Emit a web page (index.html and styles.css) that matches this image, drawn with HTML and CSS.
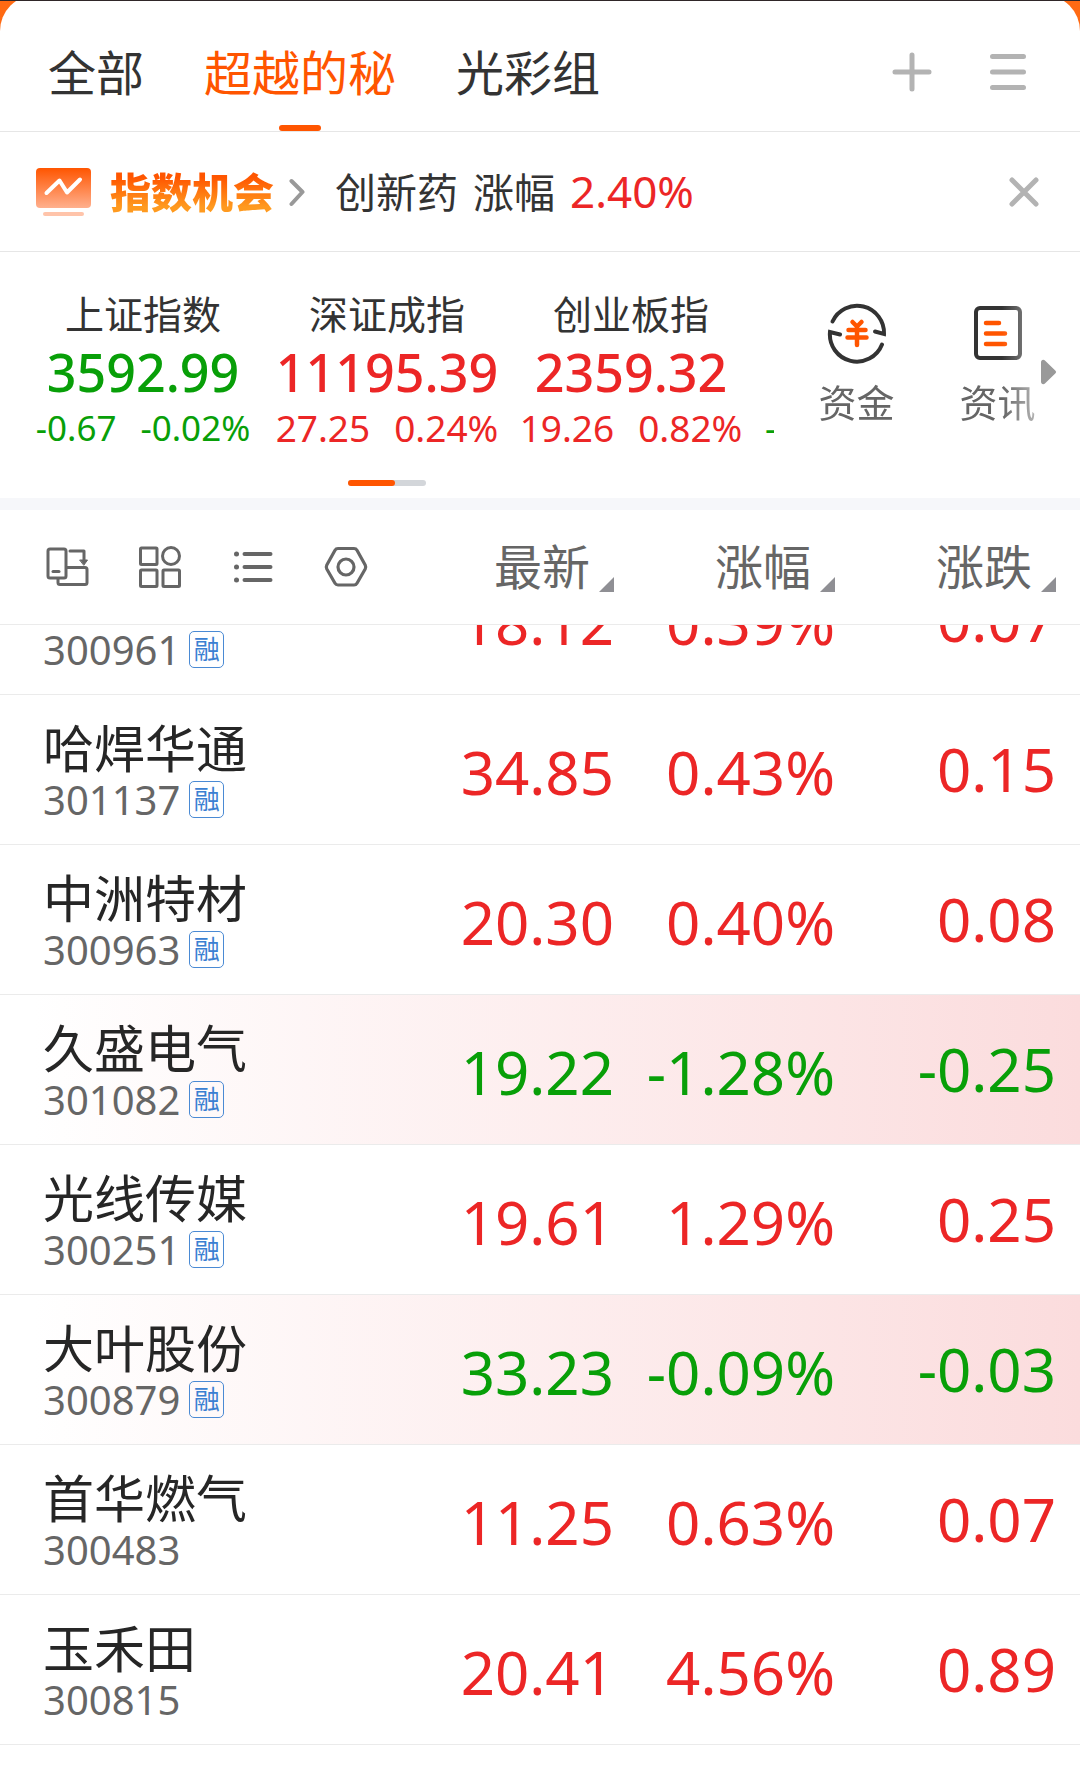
FILE: index.html
```html
<!DOCTYPE html>
<html lang="zh-CN">
<head>
<meta charset="utf-8">
<meta name="viewport" content="width=device-width, initial-scale=1">
<title>自选</title>
<link rel="stylesheet" href="styles.css">
</head>
<body>
<main class="app">
  <header class="tabs-bar">
    <nav class="tabs">
      <a class="tab" href="#all">全部</a>
      <a class="tab tab-active" href="#mi" aria-current="page">超越的秘</a>
      <a class="tab" href="#gc">光彩组</a>
    </nav>
    <div class="tab-actions">
      <button class="icon-btn" type="button" aria-label="添加">
        <svg width="48" height="48" viewBox="0 0 48 48" fill="none" stroke="#b3b3b3" stroke-width="5" stroke-linecap="round"><path d="M24 7V41M7 24H41"/></svg>
      </button>
      <button class="icon-btn" type="button" aria-label="菜单">
        <svg width="48" height="48" viewBox="0 0 48 48" fill="none" stroke="#b3b3b3" stroke-width="5" stroke-linecap="round"><path d="M8.500 8.500H39.500M8.500 24H39.500M8.500 39.500H39.500"/></svg>
      </button>
    </div>
  </header>

  <section class="banner">
    <svg class="banner-icon" width="56" height="50" viewBox="0 0 56 50" fill="none">
      <defs><linearGradient id="chart" x1="0" y1="0" x2="0" y2="1"><stop offset="0" stop-color="#ff5500"/><stop offset="1" stop-color="#ffb08e"/></linearGradient></defs>
      <rect y="1" width="55" height="40" rx="4" fill="url(#chart)"/>
      <path d="M10.500 26L23.500 13.500L31 25.500L44 12.500" stroke="#fff" stroke-width="4" stroke-linecap="round" stroke-linejoin="round"/>
      <rect x="7" y="45" width="41" height="4" rx="2" fill="#ffc4aa"/>
    </svg>
    <a class="banner-title" href="#chance">指数机会</a>
    <svg class="banner-chevron" width="16" height="30" viewBox="0 0 16 30" fill="none" stroke="#999" stroke-width="4" stroke-linecap="round" stroke-linejoin="round"><path d="M2.500 4L13.500 15L2.500 27"/></svg>
    <p class="banner-text"><span>创新药</span><span>涨幅</span><span class="banner-value">2.40%</span></p>
    <button class="icon-btn banner-close" type="button" aria-label="关闭">
      <svg width="48" height="48" viewBox="0 0 48 48" fill="none" stroke="#b3b3b3" stroke-width="5" stroke-linecap="round"><path d="M12 12L36 36M36 12L12 36"/></svg>
    </button>
  </section>

  <section class="market">
    <div class="indices">
      <div class="index-strip">
        <article class="index down">
          <h2 class="index-name">上证指数</h2>
          <p class="index-value">3592.99</p>
          <p class="index-change"><span>-0.67</span><span>-0.02%</span></p>
        </article>
        <article class="index up">
          <h2 class="index-name">深证成指</h2>
          <p class="index-value">11195.39</p>
          <p class="index-change"><span>27.25</span><span>0.24%</span></p>
        </article>
        <article class="index up">
          <h2 class="index-name">创业板指</h2>
          <p class="index-value">2359.32</p>
          <p class="index-change"><span>19.26</span><span>0.82%</span></p>
        </article>
        <article class="index-next down">
          <p class="index-change">-</p>
        </article>
      </div>
      <div class="pager"><span class="pager-current"></span></div>
    </div>
    <div class="shortcuts">
      <a class="shortcut" href="#funds">
        <svg width="64" height="64" viewBox="0 0 64 64" fill="none" stroke-width="4" stroke-linecap="round">
          <path stroke="#333" d="M7.500 20.500A27 27 0 0 1 59 33L50 30.500"/>
          <path stroke="#333" d="M15 33.500L5 31A27 27 0 0 0 57 43.500"/>
          <path stroke="#ff5500" stroke-width="4.500" stroke-linejoin="round" d="M27.500 21L32 25.500L36.500 21M23.500 29H40.500M22.500 36.500H41.500M32 26V44"/>
        </svg>
        <span class="shortcut-label">资金</span>
      </a>
      <a class="shortcut" href="#news">
        <svg width="64" height="64" viewBox="0 0 64 64" fill="none" stroke-width="4" stroke-linecap="round">
          <rect x="10" y="7" width="44" height="50" rx="4" stroke="#333"/>
          <path stroke="#ff5500" stroke-width="4.500" d="M20 22H33M20 32.500H39M20 43H39"/>
        </svg>
        <span class="shortcut-label">资讯</span>
      </a>
    </div>
    <button class="icon-btn market-more" type="button" aria-label="更多">
      <svg width="16" height="26" viewBox="0 0 16 26"><path fill="#999" d="M0 3.500C0 .8 2.500 0 4.200 1.700L14.500 11.700Q15.800 13 14.500 14.300L4.200 24.300C2.500 26 0 25.200 0 22.500Z"/></svg>
    </button>
  </section>

  <table class="quotes">
    <thead class="quotes-head">
      <tr class="row">
        <th class="tools" scope="col">
          <button class="icon-btn" type="button" aria-label="横屏">
            <svg width="48" height="48" viewBox="0 0 48 48" fill="none" stroke="#666" stroke-width="3" stroke-linecap="round" stroke-linejoin="round"><rect x="5" y="6" width="18" height="29" rx="2"/><path d="M10 28.500H16"/><path d="M27 8H41V18"/><path fill="#666" stroke-width="1" d="M37 17H44.500L41 22Z"/><path d="M15 35.500V39.500Q15 41.500 17 41.500H42Q44 41.500 44 39.500V26.500Q44 24.500 42 24.500H23.500"/></svg>
          </button>
          <button class="icon-btn" type="button" aria-label="分组">
            <svg width="48" height="48" viewBox="0 0 48 48" fill="none" stroke="#666" stroke-width="3"><rect x="4.500" y="5" width="16.500" height="16.500" rx="1"/><circle cx="35" cy="13" r="8.500"/><rect x="4.500" y="27" width="16.500" height="16.500" rx="1"/><rect x="27" y="27" width="16.500" height="16.500" rx="1"/></svg>
          </button>
          <button class="icon-btn" type="button" aria-label="列表">
            <svg width="48" height="48" viewBox="0 0 48 48" fill="none" stroke="#666" stroke-width="4" stroke-linecap="round"><path d="M15.500 11H41.500M15.500 24H41.500M15.500 37H41.500"/><path stroke-width="5" d="M7.500 11h.01M7.500 24h.01M7.500 37h.01"/></svg>
          </button>
          <button class="icon-btn" type="button" aria-label="设置">
            <svg width="48" height="48" viewBox="0 0 48 48" fill="none" stroke="#666" stroke-width="3.200" stroke-linejoin="round"><path d="M16 5.500H32Q34 5.500 35 7.200L43.200 22Q44.200 24 43.200 26L35 40.300Q34 42 32 42H16Q14 42 13 40.300L4.800 26Q3.800 24 4.800 22L13 7.200Q14 5.500 16 5.500Z"/><circle cx="24" cy="24" r="8"/></svg>
          </button>
        </th>
        <th class="sort" scope="col"><button class="sort-btn" type="button">最新</button></th>
        <th class="sort" scope="col"><button class="sort-btn" type="button">涨幅</button></th>
        <th class="sort" scope="col"><button class="sort-btn" type="button">涨跌</button></th>
      </tr>
    </thead>
    <tbody class="quotes-body">
      <tr class="row up">
        <td class="stock"><span class="code">300961</span><span class="badge">融</span></td>
        <td class="num">18.12</td><td class="num">0.39%</td><td class="num num-change">0.07</td>
      </tr>
      <tr class="row up">
        <td class="stock"><span class="name">哈焊华通</span><span class="code">301137</span><span class="badge">融</span></td>
        <td class="num">34.85</td><td class="num">0.43%</td><td class="num num-change">0.15</td>
      </tr>
      <tr class="row up">
        <td class="stock"><span class="name">中洲特材</span><span class="code">300963</span><span class="badge">融</span></td>
        <td class="num">20.30</td><td class="num">0.40%</td><td class="num num-change">0.08</td>
      </tr>
      <tr class="row down flash">
        <td class="stock"><span class="name">久盛电气</span><span class="code">301082</span><span class="badge">融</span></td>
        <td class="num">19.22</td><td class="num">-1.28%</td><td class="num num-change">-0.25</td>
      </tr>
      <tr class="row up">
        <td class="stock"><span class="name">光线传媒</span><span class="code">300251</span><span class="badge">融</span></td>
        <td class="num">19.61</td><td class="num">1.29%</td><td class="num num-change">0.25</td>
      </tr>
      <tr class="row down flash">
        <td class="stock"><span class="name">大叶股份</span><span class="code">300879</span><span class="badge">融</span></td>
        <td class="num">33.23</td><td class="num">-0.09%</td><td class="num num-change">-0.03</td>
      </tr>
      <tr class="row up">
        <td class="stock"><span class="name">首华燃气</span><span class="code">300483</span></td>
        <td class="num">11.25</td><td class="num">0.63%</td><td class="num num-change">0.07</td>
      </tr>
      <tr class="row up">
        <td class="stock"><span class="name">玉禾田</span><span class="code">300815</span></td>
        <td class="num">20.41</td><td class="num">4.56%</td><td class="num num-change">0.89</td>
      </tr>
    </tbody>
  </table>
</main>
</body>
</html>
```
FILE: styles.css
```css
:root {
  --orange: #ff5500;
  --red: #ec2626;
  --green: #089f08;
  --ink: #333;
  --muted: #666;
  --line: #e6e6e6;
}

* {
  box-sizing: border-box;
}

body {
  margin: 0;
  min-height: 100vh;
  background: #fff;
  color: var(--ink);
  font-family: "Noto Sans", "Noto Sans CJK SC", sans-serif;
}

h2,
p {
  margin: 0;
  font-weight: 400;
}

a {
  color: inherit;
  text-decoration: none;
}

button {
  padding: 0;
  border: 0;
  background: none;
  color: inherit;
  font: inherit;
}

svg {
  display: block;
}

.up {
  color: var(--red);
}

.down {
  color: var(--green);
}

.icon-btn {
  flex: none;
}

/* Group tabs: the rounded sheet slides under the top edge */
.app {
  overflow: hidden;
  border-top: 1px solid #2f2628;
  background: linear-gradient(#ff6a13, #ff6a13) top / 100% 60px no-repeat;
}

.tabs-bar {
  display: flex;
  justify-content: space-between;
  height: 137px;
  margin-top: -6px;
  padding: 6px 48px 0;
  border-bottom: 1px solid var(--line);
  border-radius: 36px 36px 0 0;
  background: #fff;
}

.tabs {
  display: flex;
  gap: 60px;
}

.tab {
  position: relative;
  padding-top: 36px;
  font-size: 48px;
  line-height: 72px;
}

.tab-active {
  color: var(--orange);
}

.tab-active::after {
  content: "";
  position: absolute;
  bottom: 0;
  left: 50%;
  width: 42px;
  height: 6px;
  margin-left: -21px;
  border-radius: 3px;
  background: var(--orange);
}

.tab-actions {
  display: flex;
  align-items: flex-start;
  gap: 48px;
  padding-top: 47px;
}

/* Opportunity banner */
.banner {
  display: flex;
  align-items: center;
  height: 120px;
  padding: 0 32px 0 36px;
  border-bottom: 1px solid var(--line);
}

.banner-title {
  margin: 0 15px 0 18px;
  background: linear-gradient(#ff5500 25%, #ff9a1f 75%);
  background-clip: text;
  color: transparent;
  font-size: 41px;
  font-weight: 900;
  line-height: 60px;
}

.banner-text {
  flex: 1;
  display: flex;
  align-items: baseline;
  gap: 15px;
  margin-left: 30px;
  font-size: 41px;
  line-height: 60px;
}

.banner-value {
  color: var(--red);
  font-size: 44px;
}

/* Index overview */
.market {
  display: flex;
  height: 258px;
  border-bottom: 12px solid #f6f7fa;
}

.indices {
  flex: 1;
  min-width: 0;
}

.index-strip {
  display: flex;
  height: 228px;
  padding: 36px 0 0 21px;
  overflow: hidden;
}

.index {
  flex: 1;
  display: flex;
  flex-direction: column;
  align-items: center;
  min-width: 0;
  white-space: nowrap;
}

.index-name {
  color: var(--ink);
  font-size: 39px;
  line-height: 52px;
}

.index-value {
  font-size: 52px;
  font-weight: 500;
  line-height: 64px;
}

.index-change {
  display: flex;
  gap: 24px;
  font-size: 37px;
  line-height: 48px;
}

.down .index-change,
.down.index-next .index-change {
  font-size: 35px;
}

.index-next {
  width: 21px;
  padding: 116px 0 0 12px;
}

.pager {
  width: 78px;
  height: 6px;
  margin: 0 auto;
  border-radius: 3px;
  background: #d3d6da;
}

.pager-current {
  display: block;
  width: 47px;
  height: 6px;
  border-radius: 3px;
  background: var(--orange);
}

.shortcuts {
  display: flex;
  width: 261px;
  padding: 49px 0 0 12px;
  overflow: hidden;
  mask-image: linear-gradient(90deg, #000 228px, rgba(0, 0, 0, 0.5));
}

.shortcut {
  flex: none;
  display: flex;
  flex-direction: column;
  align-items: center;
  gap: 10px;
  width: 141px;
}

.shortcut-label {
  color: var(--muted);
  font-size: 38px;
  line-height: 54px;
}

.market-more {
  width: 45px;
  padding: 0 0 6px 6px;
}

/* Quote table */
.quotes {
  display: block;
}

.row {
  display: grid;
  grid-template-columns: minmax(0, 1fr) repeat(3, 221px);
  align-items: center;
  height: 150px;
  padding: 0 24px 0 43px;
  border-bottom: 1px solid #ebebeb;
}

.quotes-head {
  display: block;
}

.quotes-head .row {
  height: 115px;
}

/* The list is scrolled, so its first row is partly out of view */
.quotes-body {
  display: block;
  overflow: hidden;
}

.quotes-body .row:first-child {
  margin-top: -80px;
}

.quotes td,
.quotes th {
  padding: 0;
}

.tools {
  display: flex;
  gap: 45px;
}

.sort {
  text-align: right;
}

.sort-btn {
  display: inline-flex;
  align-items: flex-end;
  gap: 9px;
  color: var(--muted);
  font-size: 48px;
  font-weight: 400;
  line-height: 72px;
}

.sort-btn::after {
  content: "";
  width: 15px;
  height: 15px;
  margin-bottom: 11px;
  background: #8f8f94;
  clip-path: polygon(100% 0, 100% 100%, 0 100%);
}

.stock {
  display: flex;
  flex-wrap: wrap;
  align-items: center;
  align-content: flex-end;
  gap: 0 9px;
  height: 104px;
}

.name {
  width: 100%;
  color: #262626;
  font-size: 51px;
  line-height: 60px;
}

.code {
  color: var(--muted);
  font-size: 40px;
  line-height: 44px;
}

.badge {
  width: 35px;
  height: 37px;
  border: 1px solid #4a8ad4;
  border-radius: 5px;
  color: #3a80d2;
  font-size: 26px;
  line-height: 34px;
  text-align: center;
}

.num {
  font-size: 60px;
  line-height: 72px;
  text-align: right;
}

.quotes .num {
  padding-top: 4px;
}

.quotes .num-change {
  padding: 0 0 2px;
}

.flash {
  background: linear-gradient(90deg, #fff 3%, #fbdcdd);
}
```
